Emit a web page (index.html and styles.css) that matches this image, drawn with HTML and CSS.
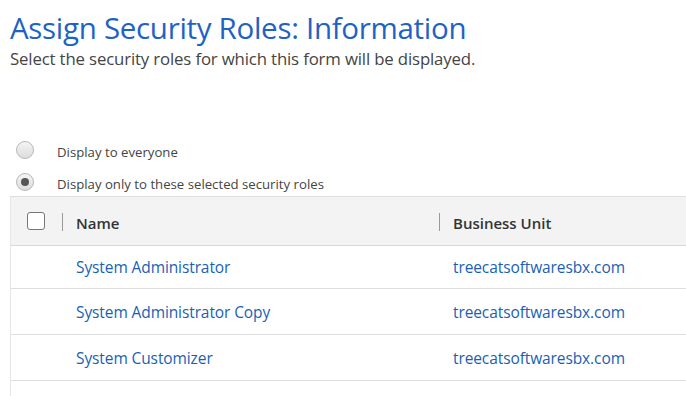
FILE: index.html
```html
<!DOCTYPE html>
<html>
<head>
<meta charset="utf-8">
<link rel="stylesheet" href="styles.css">
</head>
<body>
<div class="page">
  <h1 class="title">Assign Security Roles: Information</h1>
  <p class="subtitle">Select the security roles for which this form will be displayed.</p>
  <div class="options">
    <label class="option"><span class="radio"></span><span class="opt-text">Display to everyone</span></label>
    <label class="option"><span class="radio checked"></span><span class="opt-text">Display only to these selected security roles</span></label>
  </div>
  <div class="grid">
    <div class="row head">
      <div class="cell check"><span class="box"></span></div>
      <div class="cell name"><span class="sep"></span><span class="htext">Name</span></div>
      <div class="cell bu"><span class="sep"></span><span class="htext">Business Unit</span></div>
    </div>
    <div class="row first">
      <div class="cell check"></div>
      <div class="cell name link">System Administrator</div>
      <div class="cell bu link">treecatsoftwaresbx.com</div>
    </div>
    <div class="row">
      <div class="cell check"></div>
      <div class="cell name link">System Administrator Copy</div>
      <div class="cell bu link">treecatsoftwaresbx.com</div>
    </div>
    <div class="row">
      <div class="cell check"></div>
      <div class="cell name link">System Customizer</div>
      <div class="cell bu link">treecatsoftwaresbx.com</div>
    </div>
    <div class="row empty"></div>
  </div>
</div>
</body>
</html>
```
FILE: styles.css
```css
html, body { margin: 0; padding: 0; background: #fff; }
body { font-family: "Open Sans", "Noto Sans", sans-serif; overflow: hidden; }
.page { width: 686px; height: 396px; overflow: hidden; }
.title {
  margin: 0; padding: 10px 0 0 10px;
  font-size: 29.5px; font-weight: 400; line-height: 36px;
  color: #1e62c3; letter-spacing: -0.3px;
}
.subtitle {
  margin: 2px 0 0 0; padding-left: 10px;
  font-size: 16.8px; line-height: 22px; color: #444;
  letter-spacing: -0.15px;
}
.options { padding: 70px 0 0 16px; display: flex; flex-direction: column; gap: 12px; }
.option { display: flex; align-items: center; height: 20px; }
.radio {
  width: 18px; height: 18px; border-radius: 50%; box-sizing: border-box;
  border: 1px solid #b9b9b9;
  background: linear-gradient(#f4f4f4, #dcdcdc);
  display: flex; align-items: center; justify-content: center;
}
.radio.checked::after {
  content: ""; width: 8px; height: 8px; border-radius: 50%; background: #555;
}
.opt-text { margin-left: 23px; font-size: 13.2px; color: #444; padding-top: 3px; }
.grid { margin: 4px 0 0 10px; border-left: 1px solid #e6e6e6; border-top: 1px solid #dedede; }
.row { display: flex; height: 45px; border-bottom: 1px solid #dedede; align-items: center; }
.row.head { height: 48px; background: #f3f3f3; border-bottom: 1px solid #d8d8d8; }
.row.first { height: 42px; }
.row.empty { border-bottom: none; }
.cell { display: flex; align-items: center; font-size: 15.5px; }
.check { width: 51px; padding-left: 16px; box-sizing: border-box; }
.box { width: 18px; height: 18px; box-sizing: border-box; border: 1.5px solid #777; border-radius: 3px; background: #fff; }
.name { width: 377px; }
.bu { flex: 1; }
.head .cell { color: #333; font-weight: 600; font-size: 15px; letter-spacing: 0; }
.htext { padding-top: 3px; }
.sep { width: 1px; height: 18px; background: #999; margin-right: 13px; margin-top: 1px; }
.link { color: #1a5fb4; letter-spacing: -0.1px; }
.row .name.link { padding-left: 14px; }
```
